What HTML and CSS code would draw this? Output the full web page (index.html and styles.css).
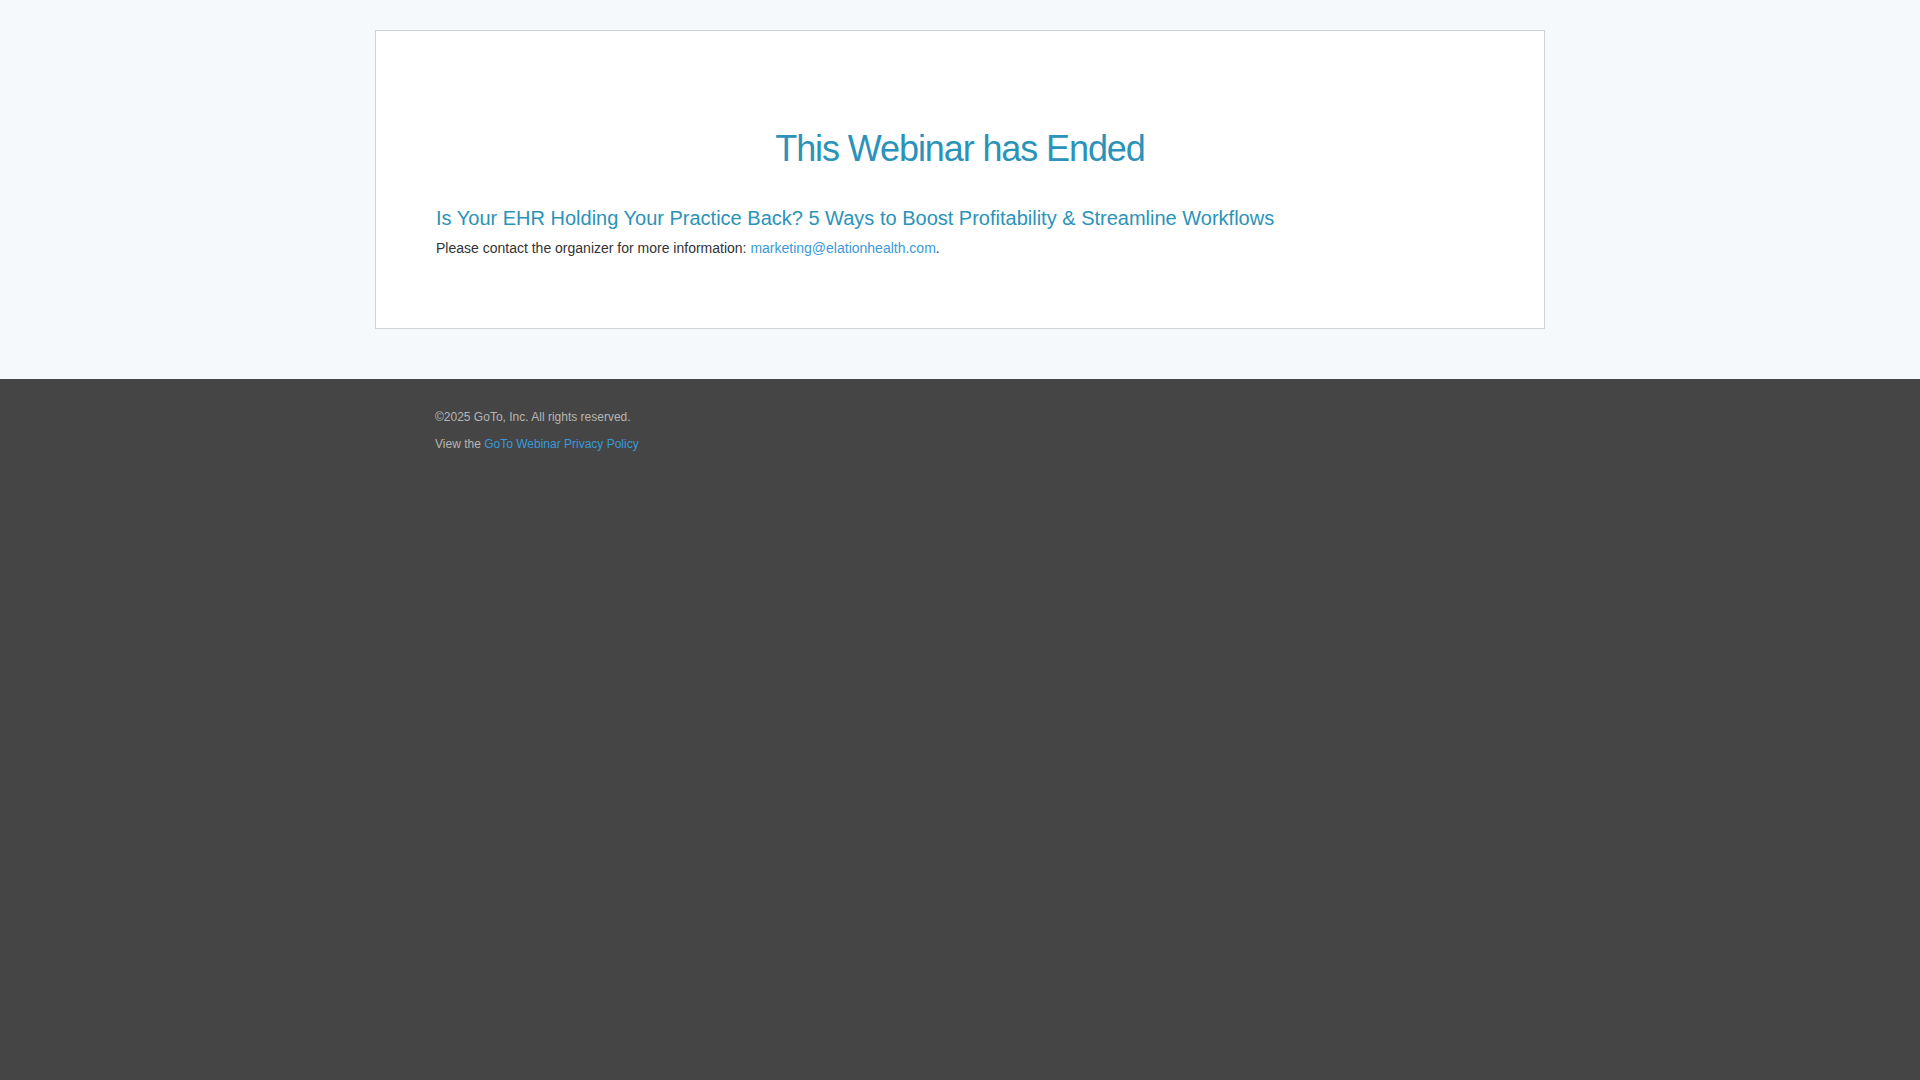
FILE: index.html
```html
<!DOCTYPE html>
<html lang="en">
<head>
<meta charset="utf-8">
<title>This Webinar has Ended</title>
<link rel="stylesheet" href="styles.css">
</head>
<body>
<main class="top">
  <section class="card">
    <h1 class="title">This Webinar has Ended</h1>
    <h2 class="subtitle">Is Your EHR Holding Your Practice Back? 5 Ways to Boost Profitability &amp; Streamline Workflows</h2>
    <p class="info">Please contact the organizer for more information: <a class="link" href="#">marketing@elationhealth.com</a>.</p>
  </section>
</main>
<footer class="footer">
  <div class="footer-inner">
    <p class="copy">&copy;2025 GoTo, Inc. All rights reserved.</p>
    <p class="policy">View the <a class="flink" href="#">GoTo Webinar Privacy Policy</a></p>
  </div>
</footer>
</body>
</html>
```
FILE: styles.css
```css
html, body {
  margin: 0;
  padding: 0;
  height: 100%;
}
body {
  font-family: "Liberation Sans", Arial, sans-serif;
  background: #454545;
  display: flex;
  flex-direction: column;
}
.top {
  background: #f5f9fc;
  padding: 30px 0 50px;
}
.card {
  box-sizing: border-box;
  width: 1170px;
  margin: 0 auto;
  background: #fff;
  border: 1px solid #cfd3d6;
  padding: 98px 60px 70px;
}
.title {
  margin: 0;
  text-align: center;
  font-weight: normal;
  font-size: 36px;
  letter-spacing: -1.1px;
  line-height: 1.1;
  color: #2b93b9;
}
.subtitle {
  margin: 38px 0 0;
  font-weight: normal;
  font-size: 20px;
  line-height: 1.1;
  color: #2b93b9;
}
.info {
  margin: 9px 0 0;
  font-size: 14px;
  line-height: 20px;
  color: #333;
}
.link {
  color: #3a9ad9;
  text-decoration: none;
}
.footer {
  flex: 1;
  background: #454545;
}
.footer-inner {
  width: 1050px;
  margin: 0 auto;
  padding-top: 30px;
}
.copy, .policy {
  margin: 0;
  font-size: 12px;
  line-height: 17px;
  color: #b5b5b5;
}
.policy {
  margin-top: 10px;
}
.flink {
  color: #3a9ad9;
  text-decoration: none;
}
```
